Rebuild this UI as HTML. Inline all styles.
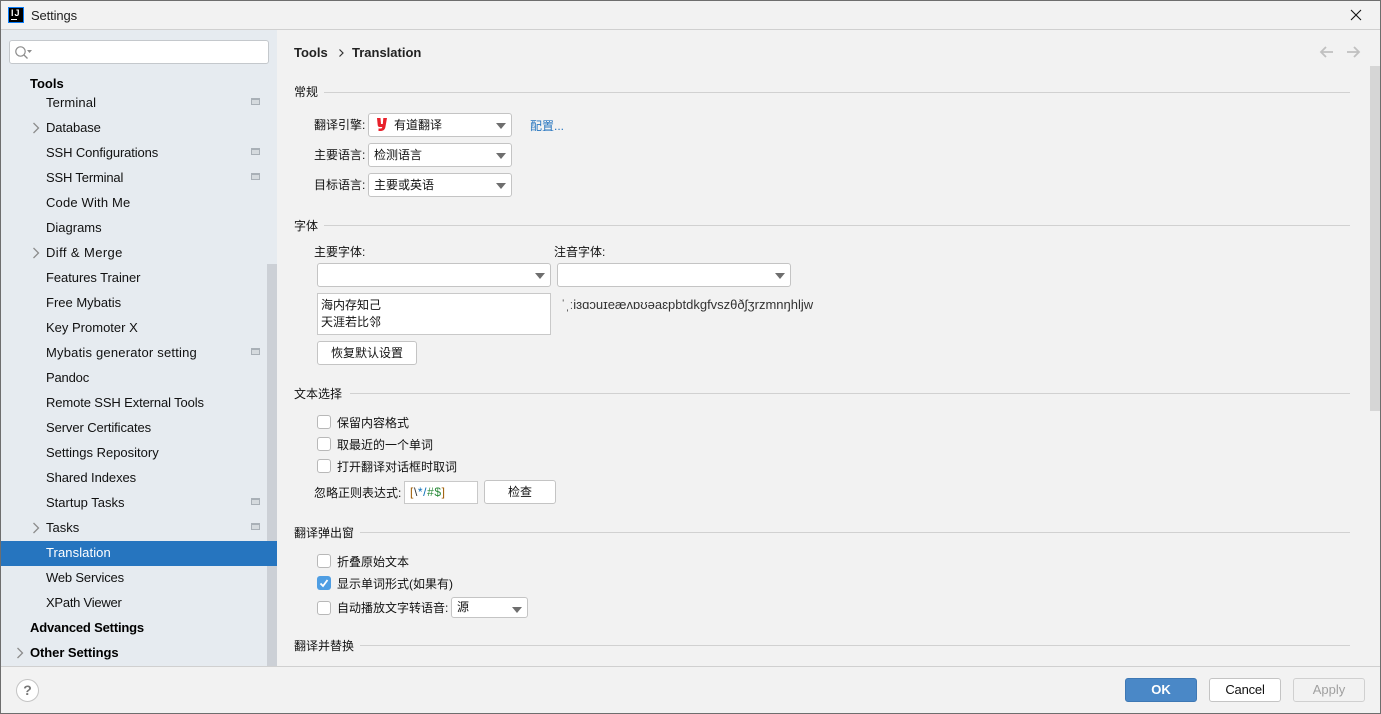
<!DOCTYPE html>
<html>
<head>
<meta charset="utf-8">
<style>
html,body{margin:0;padding:0;width:1381px;height:714px;overflow:hidden;background:#f2f2f2}
body{font-family:"Liberation Sans","Noto Sans CJK SC",sans-serif;font-size:13px;color:#000;position:relative}
.a{position:absolute;white-space:nowrap}
.t{position:absolute;white-space:nowrap;line-height:16px;height:16px}
.c{font-size:12px;color:#111}
.n{left:46px;color:#111}
.b{font-weight:bold;left:30px}
.cb{position:absolute;width:12px;height:12px;background:#fff;border:1px solid #b8b8b8;border-radius:3px;left:317px}
.combo{position:absolute;background:#fff;border:1px solid #c4c4c4;border-radius:3px;box-sizing:border-box;height:24px;line-height:22px;padding-left:5px;font-size:12px;color:#111}
.combo:after{content:"";position:absolute;right:5px;top:9px;border-left:5px solid transparent;border-right:5px solid transparent;border-top:6px solid #6e6e6e}
.btn{position:absolute;background:#fff;border:1px solid #c4c4c4;border-radius:3px;box-sizing:border-box;height:24px;line-height:22px;text-align:center;color:#111}
.hr{position:absolute;height:1px;background:#d1d1d1;right:31px}
.ic{position:absolute;left:251px;width:7px;height:4px;border:1px solid #a9b0b7;border-top-width:2px;background:#d5dade;box-sizing:content-box}
.ar{position:absolute}
</style>
</head>
<body>
<div class="a" style="left:0;top:0;width:1381px;height:1px;background:#6e6e6e"></div>
<div class="a" style="left:0;top:0;width:1px;height:714px;background:#6e6e6e"></div>
<div class="a" style="right:0;top:0;width:1px;height:714px;background:#6e6e6e"></div>
<div class="a" style="left:0;bottom:0;width:1381px;height:1px;background:#6e6e6e"></div>

<!-- Title bar -->
<div class="a" style="left:8px;top:7px;width:16px;height:16px;background:#000;border:1px solid #087cfa;box-sizing:border-box"></div>
<div class="a" style="left:11px;top:8px;color:#fff;font-size:9px;font-weight:bold;line-height:10px;letter-spacing:1px">IJ</div>
<div class="a" style="left:11px;top:19px;width:6px;height:1px;background:#fff"></div>
<div class="t" style="left:31px;top:8px;color:#222;letter-spacing:-.12px">Settings</div>
<svg class="a" style="left:1350px;top:9px" width="12" height="12" viewBox="0 0 12 12"><path d="M1 1L11 11M11 1L1 11" stroke="#111" stroke-width="1.100" fill="none"/></svg>
<div class="a" style="left:1px;top:29px;width:1379px;height:1px;background:#d0d0d0"></div>

<!-- Sidebar -->
<div class="a" style="left:1px;top:30px;width:276px;height:636px;background:#e6ebf0"></div>
<div class="a" style="left:267px;top:264px;width:10px;height:402px;background:#ccd0d6"></div>
<div class="a" style="left:9px;top:40px;width:260px;height:24px;background:#fff;border:1px solid #c4c8cc;border-radius:3px;box-sizing:border-box"></div>
<svg class="a" style="left:14px;top:45px" width="20" height="15" viewBox="0 0 20 15"><circle cx="6.500" cy="6.500" r="4.700" stroke="#8c8c8c" stroke-width="1.200" fill="none"/><path d="M10 10L13.500 13.500" stroke="#8c8c8c" stroke-width="1.300"/><path d="M13 5h5l-2.500 3z" fill="#8c8c8c"/></svg>

<div class="t b" style="top:76px">Tools</div>
<div class="t n" style="top:95px;letter-spacing:.12px">Terminal</div><div class="ic" style="top:98px"></div>
<div class="t n" style="top:120px;letter-spacing:-.12px">Database</div>
<div class="t n" style="top:145px;letter-spacing:-.11px">SSH Configurations</div><div class="ic" style="top:148px"></div>
<div class="t n" style="top:170px;letter-spacing:-.17px">SSH Terminal</div><div class="ic" style="top:173px"></div>
<div class="t n" style="top:195px;letter-spacing:.17px">Code With Me</div>
<div class="t n" style="top:220px">Diagrams</div>
<div class="t n" style="top:245px;letter-spacing:.4px">Diff &amp; Merge</div>
<div class="t n" style="top:270px;letter-spacing:-.06px">Features Trainer</div>
<div class="t n" style="top:295px">Free Mybatis</div>
<div class="t n" style="top:320px">Key Promoter X</div>
<div class="t n" style="top:345px;letter-spacing:.2px">Mybatis generator setting</div><div class="ic" style="top:348px"></div>
<div class="t n" style="top:370px;letter-spacing:-.17px">Pandoc</div>
<div class="t n" style="top:395px;letter-spacing:-.12px">Remote SSH External Tools</div>
<div class="t n" style="top:420px;letter-spacing:-.1px">Server Certificates</div>
<div class="t n" style="top:445px">Settings Repository</div>
<div class="t n" style="top:470px;letter-spacing:-.07px">Shared Indexes</div>
<div class="t n" style="top:495px">Startup Tasks</div><div class="ic" style="top:498px"></div>
<div class="t n" style="top:520px">Tasks</div><div class="ic" style="top:523px"></div>
<div class="a" style="left:1px;top:541px;width:276px;height:25px;background:#2675bf"></div>
<div class="t n" style="top:545px;color:#fff;letter-spacing:.09px">Translation</div>
<div class="t n" style="top:570px;letter-spacing:-.17px">Web Services</div>
<div class="t n" style="top:595px;letter-spacing:-.25px">XPath Viewer</div>
<div class="t b" style="top:620px;letter-spacing:-.18px">Advanced Settings</div>
<div class="t b" style="top:645px;letter-spacing:-.07px">Other Settings</div>

<svg class="ar" style="left:32px;top:122px" width="8" height="12" viewBox="0 0 8 12"><path d="M1.500 1L6.500 6L1.500 11" stroke="#8c8c8c" stroke-width="1.300" fill="none"/></svg>
<svg class="ar" style="left:32px;top:247px" width="8" height="12" viewBox="0 0 8 12"><path d="M1.500 1L6.500 6L1.500 11" stroke="#8c8c8c" stroke-width="1.300" fill="none"/></svg>
<svg class="ar" style="left:32px;top:522px" width="8" height="12" viewBox="0 0 8 12"><path d="M1.500 1L6.500 6L1.500 11" stroke="#8c8c8c" stroke-width="1.300" fill="none"/></svg>
<svg class="ar" style="left:16px;top:647px" width="8" height="12" viewBox="0 0 8 12"><path d="M1.500 1L6.500 6L1.500 11" stroke="#8c8c8c" stroke-width="1.300" fill="none"/></svg>

<!-- Header -->
<div class="t" style="left:294px;top:45px;font-weight:bold;color:#222">Tools</div>
<svg class="a" style="left:337px;top:48px" width="8" height="10" viewBox="0 0 8 10"><path d="M2.500 1.500L6 5L2.500 8.500" stroke="#333" stroke-width="1.200" fill="none"/></svg>
<div class="t" style="left:352px;top:45px;font-weight:bold;color:#222">Translation</div>
<svg class="a" style="left:1319px;top:45px" width="15" height="14" viewBox="0 0 15 14"><path d="M14 7H2M7 2L2 7L7 12" stroke="#c0c0c0" stroke-width="1.800" fill="none"/></svg>
<svg class="a" style="left:1346px;top:45px" width="15" height="14" viewBox="0 0 15 14"><path d="M1 7H13M8 2L13 7L8 12" stroke="#c0c0c0" stroke-width="1.800" fill="none"/></svg>
<div class="a" style="left:1370px;top:66px;width:10px;height:345px;background:#d6d6d6"></div>

<!-- 常规 -->
<div class="t c" style="left:294px;top:84px">常规</div>
<div class="hr" style="left:324px;top:92px"></div>
<div class="t c" style="left:314px;top:117px">翻译引擎:</div>
<div class="combo" style="left:368px;top:113px;width:144px"><span style="margin-left:20px">有道翻译</span></div>
<svg class="a" style="left:376px;top:117px" width="12" height="15" viewBox="0 0 12 15"><path d="M1 1H4.500L5 7H6.800L7.300 1H11L9.500 9.500Q9 14 4.500 14H2.500L2.500 11.500H5Q6 11.500 6.300 10H3.500Q2 10 1.700 8Z" fill="#e8212b"/></svg>
<div class="t c" style="left:530px;top:118px;color:#2675bf">配置...</div>
<div class="t c" style="left:314px;top:147px">主要语言:</div>
<div class="combo" style="left:368px;top:143px;width:144px">检测语言</div>
<div class="t c" style="left:314px;top:177px">目标语言:</div>
<div class="combo" style="left:368px;top:173px;width:144px">主要或英语</div>

<!-- 字体 -->
<div class="t c" style="left:294px;top:218px">字体</div>
<div class="hr" style="left:324px;top:225px"></div>
<div class="t c" style="left:314px;top:244px">主要字体:</div>
<div class="t c" style="left:554px;top:244px">注音字体:</div>
<div class="combo" style="left:317px;top:263px;width:234px"></div>
<div class="combo" style="left:557px;top:263px;width:234px"></div>
<div class="a c" style="left:317px;top:293px;width:234px;height:42px;background:#fff;border:1px solid #c9c9c9;box-sizing:border-box;padding:3px 3px;line-height:17px">海内存知己<br>天涯若比邻</div>
<div class="t" style="left:561px;top:297px;color:#333;font-size:13px;font-family:'Liberation Sans','DejaVu Sans',sans-serif">ˈˌːiɜɑɔuɪeæʌɒʊəaɛpbtdkgfvszθðʃʒrzmnŋhljw</div>
<div class="btn c" style="left:317px;top:341px;width:100px">恢复默认设置</div>

<!-- 文本选择 -->
<div class="t c" style="left:294px;top:386px">文本选择</div>
<div class="hr" style="left:350px;top:393px"></div>
<div class="cb" style="top:415px"></div><div class="t c" style="left:337px;top:415px">保留内容格式</div>
<div class="cb" style="top:437px"></div><div class="t c" style="left:337px;top:437px">取最近的一个单词</div>
<div class="cb" style="top:459px"></div><div class="t c" style="left:337px;top:459px">打开翻译对话框时取词</div>
<div class="t c" style="left:314px;top:485px">忽略正则表达式:</div>
<div class="a" style="left:404px;top:481px;width:74px;height:23px;background:#fff;border:1px solid #c9c9c9;box-sizing:border-box;line-height:21px;padding-left:5px;font-size:12px;letter-spacing:.6px"><span style="color:#9c5a00">[</span><span style="color:#333">\</span><span style="color:#0b6fb8">*/</span><span style="color:#2a8a3a">#$</span><span style="color:#9c5a00">]</span></div>
<div class="btn c" style="left:484px;top:480px;width:72px">检查</div>

<!-- 翻译弹出窗 -->
<div class="t c" style="left:294px;top:525px">翻译弹出窗</div>
<div class="hr" style="left:360px;top:532px"></div>
<div class="cb" style="top:554px"></div><div class="t c" style="left:337px;top:554px">折叠原始文本</div>
<div class="a" style="left:317px;top:576px;width:14px;height:14px;background:#4f9ee3;border-radius:3px"></div>
<svg class="a" style="left:317px;top:576px" width="14" height="14" viewBox="0 0 14 14"><path d="M3.500 7.500L6 10L10.500 4" stroke="#fff" stroke-width="1.800" fill="none"/></svg>
<div class="t c" style="left:337px;top:576px">显示单词形式(如果有)</div>
<div class="cb" style="top:601px"></div><div class="t c" style="left:337px;top:600px">自动播放文字转语音:</div>
<div class="combo" style="left:451px;top:597px;width:77px;height:21px;line-height:19px">源</div>

<!-- 翻译并替换 -->
<div class="t c" style="left:294px;top:638px">翻译并替换</div>
<div class="hr" style="left:360px;top:645px"></div>

<!-- Footer -->
<div class="a" style="left:1px;top:666px;width:1379px;height:1px;background:#d0d0d0"></div>
<div class="a" style="left:1px;top:667px;width:1379px;height:46px;background:#f2f2f2"></div>
<div class="a" style="left:16px;top:679px;width:21px;height:21px;border:1px solid #c4c4c4;border-radius:50%;background:#fff;text-align:center;line-height:21px;font-weight:bold;font-size:14px;color:#777">?</div>
<div class="btn" style="left:1125px;top:678px;width:72px;background:#4a88c7;border-color:#3e78b4;color:#fff;font-weight:bold">OK</div>
<div class="btn" style="left:1209px;top:678px;width:72px;letter-spacing:-.2px">Cancel</div>
<div class="btn" style="left:1293px;top:678px;width:72px;background:#f2f2f2;border-color:#d0d0d0;color:#a0a0a0">Apply</div>
</body>
</html>
